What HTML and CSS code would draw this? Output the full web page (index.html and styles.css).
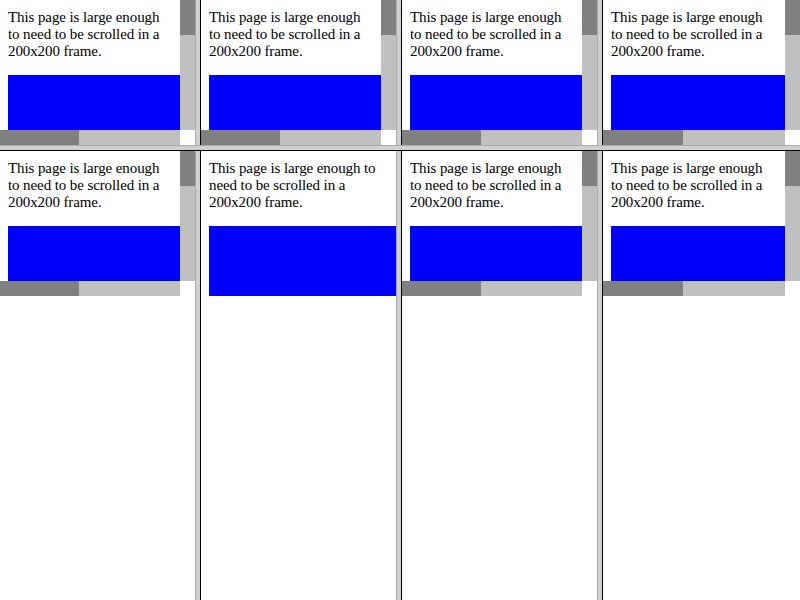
FILE: index.html
```html
<!DOCTYPE html>
<html lang="en">
<head>
    <meta charset="UTF-8">
    <title>Scrolling frames</title>
    <link rel="stylesheet" href="styles.css">
</head>
<body>

<div class="screen">

    <!-- top row: every frame scrolls both ways -->
    <div class="frame-row top">
        <div class="frame">
            <div class="view">
                <div class="doc">
                    <p class="msg">This page is large enough<br>to need to be scrolled in a<br>200x200 frame.</p>
                    <div class="block"></div>
                </div>
                <div class="vbar"><div class="thumb"></div></div>
                <div class="hbar"><div class="thumb"></div></div>
                <div class="corner"></div>
            </div>
        </div>
        <div class="col-border"></div>
        <div class="frame">
            <div class="view">
                <div class="doc">
                    <p class="msg">This page is large enough<br>to need to be scrolled in a<br>200x200 frame.</p>
                    <div class="block"></div>
                </div>
                <div class="vbar"><div class="thumb"></div></div>
                <div class="hbar"><div class="thumb"></div></div>
                <div class="corner"></div>
            </div>
        </div>
        <div class="col-border"></div>
        <div class="frame">
            <div class="view">
                <div class="doc">
                    <p class="msg">This page is large enough<br>to need to be scrolled in a<br>200x200 frame.</p>
                    <div class="block"></div>
                </div>
                <div class="vbar"><div class="thumb"></div></div>
                <div class="hbar"><div class="thumb"></div></div>
                <div class="corner"></div>
            </div>
        </div>
        <div class="col-border"></div>
        <div class="frame">
            <div class="view">
                <div class="doc">
                    <p class="msg">This page is large enough<br>to need to be scrolled in a<br>200x200 frame.</p>
                    <div class="block"></div>
                </div>
                <div class="vbar"><div class="thumb"></div></div>
                <div class="hbar"><div class="thumb"></div></div>
                <div class="corner"></div>
            </div>
        </div>
    </div>

    <div class="row-border"></div>

    <!-- bottom row: second frame has scrolling turned off -->
    <div class="frame-row bottom">
        <div class="frame">
            <div class="view">
                <div class="doc">
                    <p class="msg">This page is large enough<br>to need to be scrolled in a<br>200x200 frame.</p>
                    <div class="block"></div>
                </div>
                <div class="vbar"><div class="thumb"></div></div>
                <div class="hbar"><div class="thumb"></div></div>
                <div class="corner"></div>
            </div>
        </div>
        <div class="col-border"></div>
        <div class="frame">
            <div class="view plain">
                <div class="doc">
                    <p class="msg">This page is large enough to<br>need to be scrolled in a<br>200x200 frame.</p>
                    <div class="block"></div>
                </div>
            </div>
        </div>
        <div class="col-border"></div>
        <div class="frame">
            <div class="view">
                <div class="doc">
                    <p class="msg">This page is large enough<br>to need to be scrolled in a<br>200x200 frame.</p>
                    <div class="block"></div>
                </div>
                <div class="vbar"><div class="thumb"></div></div>
                <div class="hbar"><div class="thumb"></div></div>
                <div class="corner"></div>
            </div>
        </div>
        <div class="col-border"></div>
        <div class="frame">
            <div class="view">
                <div class="doc">
                    <p class="msg">This page is large enough<br>to need to be scrolled in a<br>200x200 frame.</p>
                    <div class="block"></div>
                </div>
                <div class="vbar"><div class="thumb"></div></div>
                <div class="hbar"><div class="thumb"></div></div>
                <div class="corner"></div>
            </div>
        </div>
    </div>

</div>

</body>
</html>
```

FILE: styles.css
```css
body {
    margin: 0;
    background-color: #ffffff;
    color: #000;
}
.screen {
    display: flex;
    flex-direction: column;
    height: 600px;
    width: 800px;
    overflow: hidden;
}
.frame-row {
    display: grid;
    grid-template-columns: 195px 6px 195px 6px 195px 6px 197px;
}
.frame-row.top { height: 145px; }
.frame-row.bottom { flex: 1; }

/* frameset borders: grey fill, lighter start edge, black end edge */
.col-border {
    background-color: #d0d0d0;
    border-left: 1px solid #aaaaaa;
    border-right: 1px solid #000;
}
.row-border {
    height: 4px;
    background-color: #d0d0d0;
    border-top: 1px solid #aaaaaa;
    border-bottom: 1px solid #000;
}

.frame {
    background-color: #fff;
    overflow: hidden;
}
.view {
    display: grid;
    grid-template-columns: 1fr 15px;
    grid-template-rows: 130px 15px;
    height: 145px;
}
.view.plain {
    grid-template-columns: 1fr;
    grid-template-rows: 145px;
}
.doc {
    overflow: hidden;
    padding: 9px 0 0 8px;
}
.msg {
    margin: 0;
    font: 15px/17px "Liberation Serif", "Times New Roman", serif;
    letter-spacing: -0.1px;
    white-space: nowrap;
}
.block {
    width: 400px;
    height: 200px;
    margin-top: 15px;
    background-color: #0000ff;
}

/* fake classic scrollbars */
.vbar, .hbar { background-color: #c0c0c0; }
.vbar .thumb {
    height: 35px;
    background-color: #808080;
}
.hbar .thumb {
    width: 44%;
    height: 100%;
    background-color: #808080;
}
.corner { background-color: #fff; }
```
